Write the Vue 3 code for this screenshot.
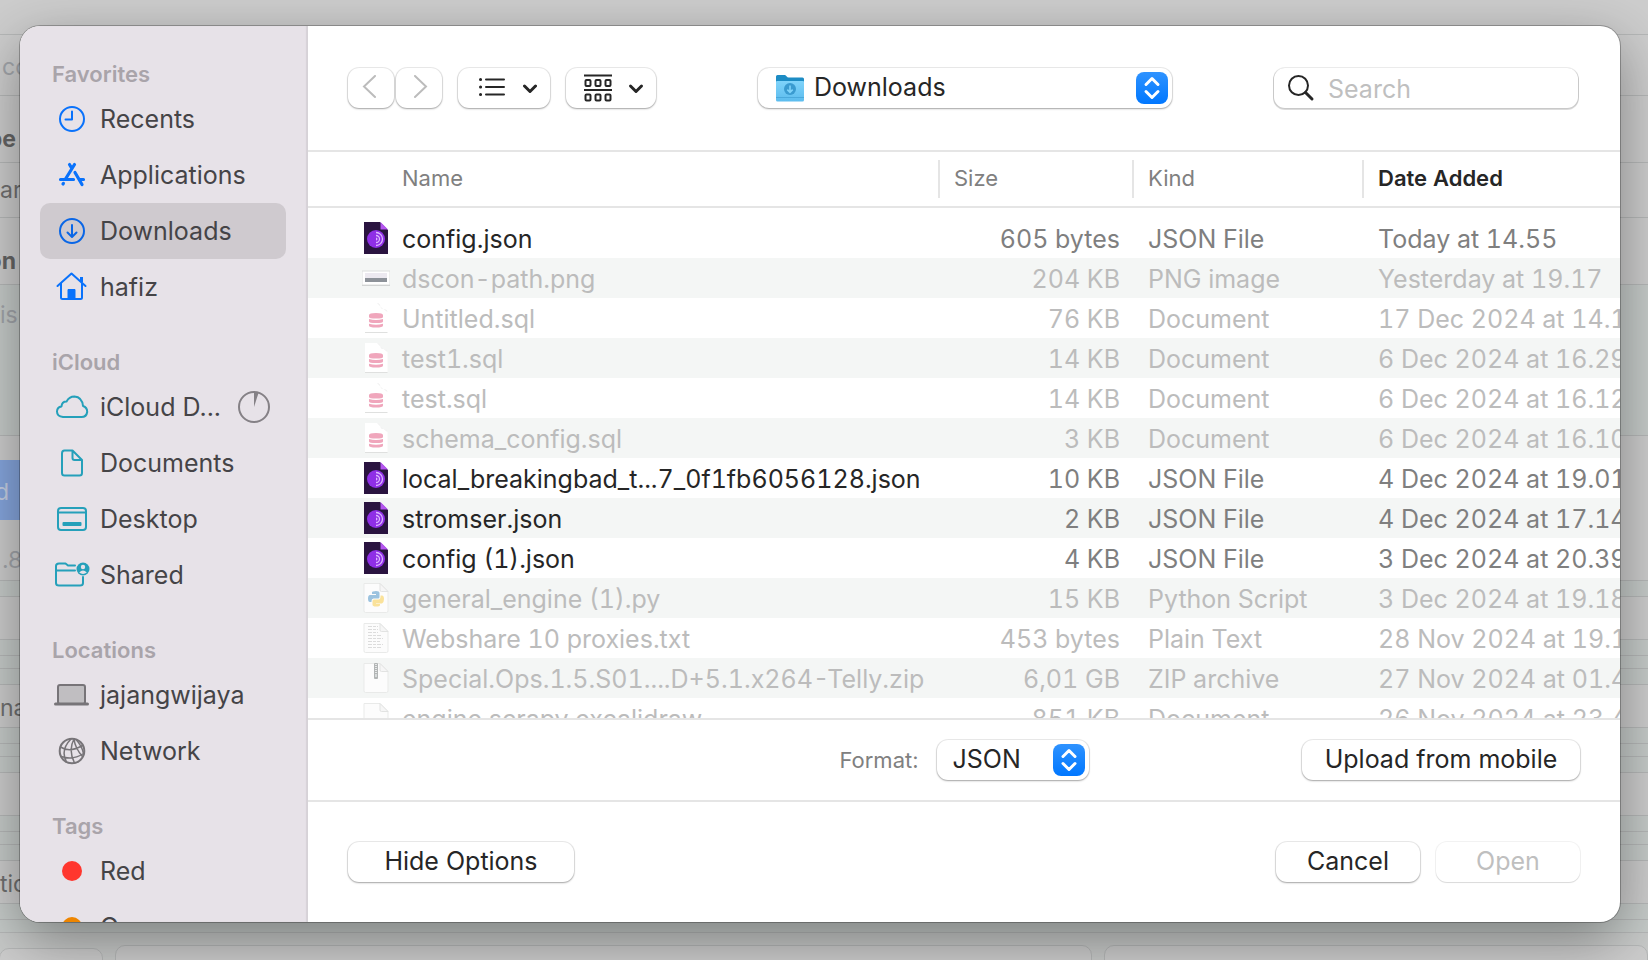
<script setup>
import { ref } from 'vue'

const backdropRows = [
  { h: 35, tone: 'plain' },
  { h: 61, tone: 'plain', text: 'cc', kind: 'muted nudge' },
  { h: 67, tone: 'plain', text: 'pe', kind: 'strong end low' },
  { h: 55, tone: 'plain', text: 'ar', kind: 'body' },
  { h: 67, tone: 'plain', text: 'on', kind: 'strong end low' },
  { h: 151, tone: 'cool', text: 'is', kind: 'muted top' },
  { h: 24, tone: 'plain bare' },
  { h: 60, tone: 'blue', text: 'd', kind: 'light end-far nudge' },
  { h: 61, tone: 'plain', text: '.8', kind: 'muted low' },
  { h: 16, tone: 'cool' },
  { h: 43, tone: 'plain' },
  { h: 16, tone: 'cool' },
  { h: 13, tone: 'cool' },
  { h: 16, tone: 'cool' },
  { h: 43, tone: 'plain', text: 'na', kind: 'body nudge' },
  { h: 16, tone: 'cool' },
  { h: 13, tone: 'cool' },
  { h: 16, tone: 'cool' },
  { h: 43, tone: 'plain' },
  { h: 16, tone: 'cool' },
  { h: 13, tone: 'cool' },
  { h: 16, tone: 'cool' },
  { h: 43, tone: 'plain', text: 'tio', kind: 'body nudge' },
  { h: 16, tone: 'cool' },
  { h: 13, tone: 'cool' },
]

const sections = [
  {
    title: 'Favorites',
    items: [
      { icon: 'clock', label: 'Recents' },
      { icon: 'apps', label: 'Applications' },
      { icon: 'download', label: 'Downloads' },
      { icon: 'home', label: 'hafiz' },
    ],
  },
  {
    title: 'iCloud',
    items: [
      { icon: 'cloud', label: 'iCloud D...', progress: true },
      { icon: 'document', label: 'Documents' },
      { icon: 'desktop', label: 'Desktop' },
      { icon: 'shared', label: 'Shared' },
    ],
  },
  {
    title: 'Locations',
    items: [
      { icon: 'laptop', label: 'jajangwijaya' },
      { icon: 'network', label: 'Network' },
    ],
  },
  {
    title: 'Tags',
    items: [
      { icon: 'red', label: 'Red' },
      { icon: 'orange', label: 'Orange' },
    ],
  },
]

const files = [
  { icon: 'json', name: 'config.json', size: '605 bytes', kind: 'JSON File', date: 'Today at 14.55', on: true },
  { icon: 'png', name: 'dscon-path.png', size: '204 KB', kind: 'PNG image', date: 'Yesterday at 19.17' },
  { icon: 'sql', name: 'Untitled.sql', size: '76 KB', kind: 'Document', date: '17 Dec 2024 at 14.12' },
  { icon: 'sql', name: 'test1.sql', size: '14 KB', kind: 'Document', date: '6 Dec 2024 at 16.29' },
  { icon: 'sql', name: 'test.sql', size: '14 KB', kind: 'Document', date: '6 Dec 2024 at 16.12' },
  { icon: 'sql', name: 'schema_config.sql', size: '3 KB', kind: 'Document', date: '6 Dec 2024 at 16.10' },
  { icon: 'json', name: 'local_breakingbad_t...7_0f1fb6056128.json', size: '10 KB', kind: 'JSON File', date: '4 Dec 2024 at 19.01', on: true },
  { icon: 'json', name: 'stromser.json', size: '2 KB', kind: 'JSON File', date: '4 Dec 2024 at 17.14', on: true },
  { icon: 'json', name: 'config (1).json', size: '4 KB', kind: 'JSON File', date: '3 Dec 2024 at 20.39', on: true },
  { icon: 'py', name: 'general_engine (1).py', size: '15 KB', kind: 'Python Script', date: '3 Dec 2024 at 19.18' },
  { icon: 'txt', name: 'Webshare 10 proxies.txt', size: '453 bytes', kind: 'Plain Text', date: '28 Nov 2024 at 19.1' },
  { icon: 'zip', name: 'Special.Ops.1.5.S01....D+5.1.x264-Telly.zip', size: '6,01 GB', kind: 'ZIP archive', date: '27 Nov 2024 at 01.4' },
  { icon: 'blank', name: 'engine.scrapy.excalidraw', size: '851 KB', kind: 'Document', date: '26 Nov 2024 at 23.4' },
]

const current = ref('Downloads')
const folder = ref('Downloads')
const format = ref('JSON')
const query = ref('')
</script>

<template>
  <div class="page">
    <div class="backdrop" aria-hidden="true">
      <div
        v-for="(row, i) in backdropRows"
        :key="i"
        :class="['strip', row.tone]"
        :style="{ height: row.h + 'px' }"
      >
        <span v-if="row.text" :class="['scrap', row.kind]">{{ row.text }}</span>
      </div>
      <div class="cards">
        <div class="card first"></div>
        <div class="card wide"></div>
        <div class="card last"></div>
      </div>
    </div>

    <div class="dialog" role="dialog" aria-label="Open file">
      <nav class="sidebar">
        <section v-for="section in sections" :key="section.title">
          <h2>{{ section.title }}</h2>
          <a
            v-for="item in section.items"
            :key="item.label"
            href="#"
            :class="['place', { selected: item.label === current }]"
            @click.prevent="current = item.label"
          >
            <svg class="place-icon" viewBox="0 0 36 36" fill="none" stroke-width="2" stroke-linecap="round" stroke-linejoin="round">
              <g v-if="item.icon === 'clock'" stroke="#0a72fb">
                <circle cx="18" cy="18" r="12" />
                <path d="M18 10.500V18.500H11.500" />
              </g>
              <g v-else-if="item.icon === 'apps'" stroke="#0a72fb" stroke-width="3.200">
                <path d="M15.500 7.500L17.600 11M20.500 7.500L11.500 22M21 15.500L28 27.500M6.500 22.500H19.500M26.500 22.500H29.500M9 27L9.400 26.400" />
              </g>
              <g v-else-if="item.icon === 'download'" stroke="#0a66e6">
                <circle cx="18" cy="18" r="12" />
                <path d="M18 12V23.500M13.500 19.500L18 24L22.500 19.500" />
              </g>
              <g v-else-if="item.icon === 'home'" stroke="#0a72fb">
                <path d="M3.500 17L17.500 4.500L31.500 17M7 14.500V28.500Q7 30 8.500 30H26.500Q28 30 28 28.500V14.500" />
                <path d="M27.500 8V13" stroke-width="3" stroke-linecap="butt" />
                <path d="M14 30V20.500H21V30Z" fill="#0a72fb" stroke-width="1" />
              </g>
              <g v-else-if="item.icon === 'cloud'" stroke="#25a0ba">
                <path d="M9 28Q3 27.500 3 22.500Q3.200 18 7.500 17.500Q8 12.500 12.500 12.600Q15 7.500 20.500 7.500Q28 8 29 17Q33.300 18.500 33.200 23Q32.500 28 27.500 28Z" />
              </g>
              <g v-else-if="item.icon === 'document'" stroke="#25a0ba">
                <path d="M18.500 5.500H10.500Q8 5.500 8 8.500V28Q8 30.500 10.500 30.500H25.500Q28 30.500 28 28V15L18.500 5.500V13Q18.500 15 20.500 15H28" />
              </g>
              <g v-else-if="item.icon === 'desktop'" stroke="#25a0ba">
                <rect x="4" y="7" width="28" height="22" rx="3" />
                <path d="M4.500 11.500H31.500" />
                <rect x="8.500" y="21" width="19" height="4" rx="1" fill="#25a0ba" stroke="none" />
              </g>
              <g v-else-if="item.icon === 'shared'" stroke="#25a0ba">
                <path d="M21 8.500H14L11.500 6.500H5Q2 6.500 2 9V26Q2 28.500 5 28.500H26Q29 28.500 29 26V20M2 13.500H21" />
                <circle cx="29" cy="12" r="6.500" fill="#25a0ba" stroke="none" />
                <circle cx="29" cy="10" r="2.200" fill="#e7e2e8" stroke="none" />
                <path d="M25.200 15.600Q29 11.200 32.800 15.600Q29 18.400 25.200 15.600Z" fill="#e7e2e8" stroke="none" />
              </g>
              <g v-else-if="item.icon === 'laptop'" stroke="#777478">
                <rect x="4" y="8" width="27" height="19" rx="2" fill="#c0bec1" />
                <path d="M1.500 27H33.500" stroke-width="3" />
              </g>
              <g v-else-if="item.icon === 'network'" stroke="#777478" stroke-width="1.500">
                <circle cx="18" cy="18" r="12.300" stroke-width="2" />
                <path d="M6.500 14Q16 20 28.500 12.500M7 23.500Q19 27.500 29.500 20.500M17 6Q6 17 12.500 29M20 6Q14 17 20.500 30M20 6Q21 15 28.500 23.500M22 6.500Q28 13 29.500 20.500" />
              </g>
              <circle v-else cx="18" cy="18" r="10" :class="['tag', item.icon]" />
            </svg>
            <span class="place-label">{{ item.label }}</span>
            <svg v-if="item.progress" class="progress" viewBox="0 0 32 32">
              <circle cx="16" cy="16" r="15" fill="none" stroke="#858186" stroke-width="2" />
              <path d="M16 16V1Q18.500 1 20.500 2Z" fill="#858186" />
            </svg>
          </a>
        </section>
      </nav>

      <main class="content">
        <header class="toolbar">
          <div class="tools">
            <div class="history">
              <button type="button" class="control nav" aria-label="Back" disabled>
                <svg class="chev" viewBox="0 0 24 24"><path d="M16 1L5 11.500L16 22" /></svg>
              </button>
              <button type="button" class="control nav" aria-label="Forward" disabled>
                <svg class="chev" viewBox="0 0 24 24"><path d="M8 1L19 11.500L8 22" /></svg>
              </button>
            </div>
            <button type="button" class="control menu" aria-label="View as list">
              <svg class="glyph" viewBox="0 0 28 28" fill="none" stroke="#262626" stroke-width="2" stroke-linecap="round">
                <path d="M9 5.500H27M9 13H27M9 20.500H27" />
                <path d="M3.500 5.500H3.600M3.500 13H3.600M3.500 20.500H3.600" stroke-width="3" />
              </svg>
              <svg class="caret" viewBox="0 0 16 16"><path d="M3.500 6L9 11.500L14.500 6" /></svg>
            </button>
            <button type="button" class="control menu group" aria-label="Group by">
              <svg class="glyph" viewBox="0 0 28 28" fill="none" stroke="#262626" stroke-width="2">
                <path d="M0 1.500H28M0 16H28" />
                <rect x="1.500" y="6" width="5" height="6" rx="1" />
                <rect x="11.500" y="6" width="5" height="6" rx="1" />
                <rect x="21.500" y="6" width="5" height="6" rx="1" />
                <rect x="1.500" y="20.500" width="5" height="6" rx="1" />
                <rect x="11.500" y="20.500" width="5" height="6" rx="1" />
                <rect x="21.500" y="20.500" width="5" height="6" rx="1" />
              </svg>
              <svg class="caret" viewBox="0 0 16 16"><path d="M2.500 6L8 11.500L13.500 6" /></svg>
            </button>
          </div>

          <div class="popup folder">
            <svg class="folder-icon" viewBox="0 0 30 30">
              <defs>
                <linearGradient id="folderFront" x1="0" y1="0" x2="0" y2="1">
                  <stop offset="0" stop-color="#7fd3fa" />
                  <stop offset="1" stop-color="#5cbcee" />
                </linearGradient>
              </defs>
              <path d="M1 3.500Q1 2 2.500 2H9.500Q10.500 2 11.500 3.200T13.500 4.500H27.500Q29 4.500 29 6V12H1Z" fill="#1d8cc4" />
              <path d="M1 9Q1 8 2 8H28Q29 8 29 9V27Q29 28.500 27.500 28.500H2.500Q1 28.500 1 27Z" fill="url(#folderFront)" />
              <path d="M1 24.500H29" stroke="#4aa9dc" stroke-width="1" />
              <circle cx="15" cy="16" r="6" fill="#3a9bd0" />
              <path d="M15 12.500V19M12.300 16.700L15 19.300L17.700 16.700" fill="none" stroke="#7fd3fa" stroke-width="1.600" />
            </svg>
            <select v-model="folder" aria-label="Folder">
              <option>Downloads</option>
            </select>
            <svg class="stepper" viewBox="0 0 32 32"><path d="M10 12.500L16 6.500L22 12.500M10 19.500L16 25.500L22 19.500" /></svg>
          </div>

          <label class="search">
            <svg class="lens" viewBox="0 0 28 28"><circle cx="11.500" cy="11.500" r="9.500" /><path d="M18.500 18.500L25 25" /></svg>
            <input v-model="query" type="text" placeholder="Search" aria-label="Search" />
          </label>
        </header>

        <div class="list">
          <table>
            <colgroup>
              <col />
              <col class="col-size" />
              <col class="col-kind" />
              <col class="col-date" />
            </colgroup>
            <thead>
              <tr>
                <th class="name"><span>Name</span></th>
                <th><span>Size</span></th>
                <th><span>Kind</span></th>
                <th class="sorted"><span>Date Added</span></th>
              </tr>
            </thead>
            <tbody>
              <tr v-for="file in files" :key="file.name" :class="{ enabled: file.on }">
                <td>
                  <div class="file">
                    <svg class="file-icon" viewBox="0 0 28 32">
                      <g v-if="file.icon === 'json'">
                        <path d="M2 0H18L26 8V32H2Z" fill="#2a1440" />
                        <path d="M18.500 0L26 7.500H18.500Z" fill="#b455f0" />
                        <circle cx="14" cy="17" r="9" fill="#8f2fe6" />
                        <path d="M14 10.500A6.500 6.500 0 0 1 14 23.500M14 13.500A3.500 3.500 0 0 1 14 20.500" fill="none" stroke="#ddb6ff" stroke-width="1.300" />
                        <path d="M14 15.500A1.500 1.500 0 0 1 14 18.500Z" fill="#ddb6ff" />
                      </g>
                      <g v-else-if="file.icon === 'png'">
                        <rect x="0" y="10" width="28" height="14" fill="#c9cbca" />
                        <rect x="0" y="9" width="28" height="14" fill="#fff" stroke="#dcdedd" stroke-width="1" />
                        <rect x="3" y="11" width="22" height="5" fill="#ece9f0" />
                        <rect x="3" y="16" width="22" height="4" fill="#8d9299" />
                      </g>
                      <g v-else-if="file.icon === 'sql'">
                        <path d="M3 1H15Q18 1 18.500 5Q19 7 21 7Q25 7 25.500 10V30H3Z" fill="#fff" />
                        <path d="M15 1Q18 1 18.500 5Q19 7 21 7Q25 7 25.500 10Q20 7 15 1Z" fill="#efefef" />
                        <path d="M3 30.500H25.500" stroke="#dfe0df" />
                        <g fill="#f0a6bc">
                          <path d="M7 13Q7 11 14 11T21 13V15Q21 16.500 14 16.500T7 15Z" />
                          <path d="M7 17Q14 19 21 17V19.500Q21 21 14 21T7 19.500Z" />
                          <path d="M7 21.700Q14 23.700 21 21.700V23.500Q21 25.500 14 25.500T7 23.500Z" />
                        </g>
                      </g>
                      <g v-else>
                        <path d="M2 1.500H18L26 9.500V29Q26 30.500 24.500 30.500H3.500Q2 30.500 2 29Z" fill="#fcfcfc" stroke="#e9eae9" stroke-width="1" />
                        <path d="M18 1.500V8Q18 9.500 19.500 9.500H26Z" fill="#f6f6f6" stroke="#e2e3e2" stroke-width="1" />
                        <g v-if="file.icon === 'py'">
                          <path d="M10 10.500Q10 9 14 9Q17.500 9 17.500 11V15Q17.500 16.500 16 16.500H11.500Q9.500 16.500 9.500 19V20H8Q6 20 6 16.500T8 13H14V12H10Z" fill="#9cc3df" />
                          <path d="M18 23Q18 24.500 14 24.500Q10.500 24.500 10.500 22.500V19Q10.500 17.500 12 17.500H16.500Q18.500 17.500 18.500 14.500V13.500H20Q22 13.500 22 17T20 21.500H14V22H18Z" fill="#fae29a" />
                        </g>
                        <path v-else-if="file.icon === 'txt'" d="M6 4.500H16M6 7.500H16M6 10.500H16M6 13.500H20M6 16.500H21M6 19.500H18M6 22.500H21M6 25.500H20" stroke="#dcdcdc" stroke-width="1" stroke-dasharray="4 1 3 1" />
                        <g v-else-if="file.icon === 'zip'">
                          <rect x="12" y="1" width="4" height="16" rx="1" fill="#b2b5b5" />
                          <path d="M14 2V11" stroke="#e7e9e9" stroke-dasharray="1 1" stroke-width="2" />
                          <rect x="13" y="12" width="2" height="3" fill="#d6dada" />
                        </g>
                      </g>
                    </svg>
                    <span class="file-name">{{ file.name }}</span>
                  </div>
                </td>
                <td class="size">{{ file.size }}</td>
                <td class="text">{{ file.kind }}</td>
                <td class="text">{{ file.date }}</td>
              </tr>
            </tbody>
          </table>
        </div>

        <div class="options">
          <div class="format">
            <label for="format">Format:</label>
            <div class="popup">
              <select id="format" v-model="format">
                <option>JSON</option>
              </select>
              <svg class="stepper" viewBox="0 0 32 32"><path d="M10 12.500L16 6.500L22 12.500M10 19.500L16 25.500L22 19.500" /></svg>
            </div>
          </div>
          <button type="button" class="control upload">Upload from mobile</button>
        </div>

        <footer class="actions">
          <button type="button" class="control hide">Hide Options</button>
          <div class="confirm">
            <button type="button" class="control">Cancel</button>
            <button type="button" class="control" disabled>Open</button>
          </div>
        </footer>
      </main>
    </div>
  </div>
</template>

<style>
body {
  margin: 0;
}
</style>

<style scoped>
.page {
  position: relative;
  box-sizing: border-box;
  height: 100vh;
  min-height: 640px;
  padding: 26px 28px 38px 20px;
  overflow: hidden;
  background: #cdcdcd;
  font-family: Inter, "Liberation Sans", sans-serif;
  font-size: 25px;
  color: #262626;
}

.page *,
.page *::before {
  box-sizing: border-box;
}

.backdrop {
  position: absolute;
  inset: 0;
  overflow: hidden;
  background: #c8cac9;
}

.strip {
  display: flex;
  align-items: center;
  background: #cdcdcd;
  border-bottom: 1px solid #b6b8b8;
}

.strip.cool {
  background: #c6cbc9;
}

.strip.bare {
  border-bottom: 0;
}

.strip.blue {
  background: linear-gradient(90deg, #86a6de 50%, #cdcdcd 50%);
  border-bottom: 0;
}

.scrap {
  width: 60px;
  font-size: 23px;
  line-height: 28px;
  color: #707070;
}

.scrap.strong {
  font-weight: 700;
  color: #656565;
}

.scrap.muted {
  padding-left: 2px;
  color: #a2a5aa;
}

.scrap.top {
  align-self: flex-start;
  padding-left: 0;
  padding-top: 16px;
}

.scrap.nudge {
  padding-top: 4px;
}

.scrap.low {
  padding-top: 20px;
}

.scrap.end,
.scrap.end-far {
  display: flex;
  justify-content: flex-end;
  width: 16px;
}

.scrap.end-far {
  width: 9px;
  color: #c6d0e4;
}

.cards {
  display: flex;
  gap: 12px;
  height: 40px;
  padding-top: 12px;
}

.card {
  background: #cdcdcd;
  border: 1px solid #b6b8b8;
  border-radius: 10px;
}

.card.first {
  width: 104px;
  margin: 3px 0 0 -1px;
}

.card.wide {
  flex: 1;
}

.card.last {
  width: 33%;
}

.dialog {
  position: relative;
  display: flex;
  height: 100%;
  overflow: hidden;
  background: #fff;
  border-radius: 20px;
  box-shadow: 0 0 0 1px rgba(0, 0, 0, 0.26), 0 18px 56px rgba(0, 0, 0, 0.38);
}

.sidebar {
  display: flex;
  flex-direction: column;
  flex: none;
  gap: 30px;
  width: 288px;
  padding: 31px 22px 0 20px;
  overflow: hidden;
  background: #e7e2e8;
  box-shadow: inset -2px 0 1px #d6d2d7;
}

.sidebar section {
  flex: none;
}

h2 {
  margin: 0;
  padding-left: 12px;
  font-size: 22px;
  font-weight: 600;
  line-height: 34px;
  color: #a9a4aa;
}

.place {
  display: flex;
  align-items: center;
  height: 56px;
  padding: 0 16px 0 14px;
  border-radius: 10px;
  color: #454447;
  text-decoration: none;
  white-space: nowrap;
}

.place.selected {
  background: #cfcacf;
}

.place-icon {
  flex: none;
  width: 36px;
  height: 36px;
}

.place-label {
  flex: 1;
  padding-left: 10px;
}

.progress {
  flex: none;
  width: 32px;
  height: 32px;
}

.tag.red {
  fill: #ff362e;
}

.tag.orange {
  fill: #ee8500;
}

.content {
  display: flex;
  flex-direction: column;
  flex: 1;
  min-width: 0;
}

.toolbar {
  display: flex;
  align-items: center;
  justify-content: space-between;
  padding: 42px 42px 42px 40px;
  border-bottom: 2px solid #e5e5e5;
}

.tools {
  display: flex;
  gap: 16px;
}

.history {
  display: flex;
  gap: 2px;
}

.control,
.popup select {
  height: 40px;
  margin: 0;
  border: 0;
  border-radius: 11px;
  background: #fff;
  box-shadow: 0 0 0 1px rgba(0, 0, 0, 0.08), 0 1px 2px rgba(0, 0, 0, 0.3);
  font: inherit;
  color: #262626;
}

.control {
  display: flex;
  align-items: center;
  justify-content: center;
  min-width: 144px;
  padding: 0 0 3px;
}

.control:disabled {
  color: #bfbfbf;
  box-shadow: 0 0 0 1px rgba(0, 0, 0, 0.05), 0 1px 1px rgba(0, 0, 0, 0.1);
}

.control.nav {
  min-width: 46px;
  box-shadow: 0 0 0 1px rgba(0, 0, 0, 0.08), 0 1px 2px rgba(0, 0, 0, 0.3);
}

.chev {
  width: 24px;
  height: 24px;
  fill: none;
  stroke: #bcbcbc;
  stroke-width: 2;
  stroke-linecap: round;
}

.control.menu {
  gap: 16px;
  min-width: 92px;
  padding: 0 0 0 6px;
}

.control.group {
  min-width: 90px;
}

.glyph {
  width: 28px;
  height: 28px;
}

.caret {
  width: 16px;
  height: 16px;
  fill: none;
  stroke: #262626;
  stroke-width: 3;
  stroke-linecap: round;
  stroke-linejoin: round;
}

.popup {
  position: relative;
  width: 152px;
}

.popup.folder {
  width: 414px;
}

.popup select {
  display: block;
  width: 100%;
  padding: 0 40px 3px 16px;
  appearance: none;
}

.popup.folder select {
  padding-left: 56px;
}

.folder-icon {
  position: absolute;
  top: 5px;
  left: 17px;
  width: 30px;
  height: 30px;
}

.stepper {
  position: absolute;
  top: 4px;
  right: 4px;
  width: 32px;
  height: 32px;
  border-radius: 8px;
  background: linear-gradient(#2f93ff, #0077ff);
  fill: none;
  stroke: #fff;
  stroke-width: 3;
  stroke-linecap: round;
  stroke-linejoin: round;
  pointer-events: none;
}

.search {
  display: flex;
  align-items: center;
  gap: 13px;
  width: 304px;
  height: 40px;
  padding: 0 13px;
  border-radius: 11px;
  box-shadow: 0 0 0 1px rgba(0, 0, 0, 0.08), 0 1px 0 1px rgba(0, 0, 0, 0.14);
}

.lens {
  flex: none;
  width: 28px;
  height: 28px;
  fill: none;
  stroke: #262626;
  stroke-width: 2;
  stroke-linecap: round;
}

.lens path {
  stroke-width: 3;
}

.search input {
  flex: 1;
  min-width: 0;
  padding: 1px 0 0;
  border: 0;
  outline: 0;
  background: none;
  font: inherit;
  color: #262626;
}

.search input::placeholder {
  color: #bfbfbf;
  opacity: 1;
}

.list {
  flex: 1;
  min-height: 0;
  overflow: hidden;
}

table {
  width: 100%;
  table-layout: fixed;
  border-collapse: separate;
  border-spacing: 0;
  font-variant-numeric: tabular-nums;
}

.col-size {
  width: 194px;
}

.col-kind {
  width: 230px;
}

.col-date {
  width: 258px;
}

th {
  height: 56px;
  padding: 0;
  border-bottom: 2px solid #e5e5e5;
  font-size: 22px;
  font-weight: 400;
  text-align: left;
  color: #808080;
}

th span {
  display: block;
  height: 38px;
  padding-left: 14px;
  border-left: 2px solid #e5e5e5;
  line-height: 36px;
}

th.name span {
  padding-left: 94px;
  border-left: 0;
}

th.sorted {
  font-weight: 600;
  color: #262626;
}

tbody::before {
  content: "";
  display: block;
  height: 10px;
}

td {
  height: 40px;
  padding: 0;
  overflow: hidden;
  line-height: 38px;
  white-space: nowrap;
  color: #bcbcbc;
}

td.size,
td.text,
.file-name {
  padding-top: 2px;
}

tr:nth-child(even) td {
  background: #f4f6f5;
}

.enabled td {
  color: #7f7f7f;
}

.enabled .file {
  color: #262626;
}

.file {
  display: flex;
  align-items: center;
  gap: 12px;
  height: 40px;
  padding-left: 54px;
}

.file-icon {
  flex: none;
  width: 28px;
  height: 32px;
}

td.size {
  padding-right: 12px;
  text-align: right;
}

td.text {
  padding-left: 16px;
}

.options {
  display: grid;
  grid-template-columns: 1fr auto 1fr;
  align-items: center;
  padding: 20px 40px;
  border-top: 2px solid #e5e5e5;
  border-bottom: 2px solid #e5e5e5;
}

.format {
  display: flex;
  grid-column: 2;
  align-items: center;
  gap: 18px;
}

.format label {
  font-size: 22px;
  color: #808080;
}

.upload {
  justify-self: end;
  width: 278px;
}

.actions {
  display: flex;
  align-items: center;
  justify-content: space-between;
  padding: 40px;
}

.hide {
  width: 226px;
}

.confirm {
  display: flex;
  gap: 16px;
}
</style>
